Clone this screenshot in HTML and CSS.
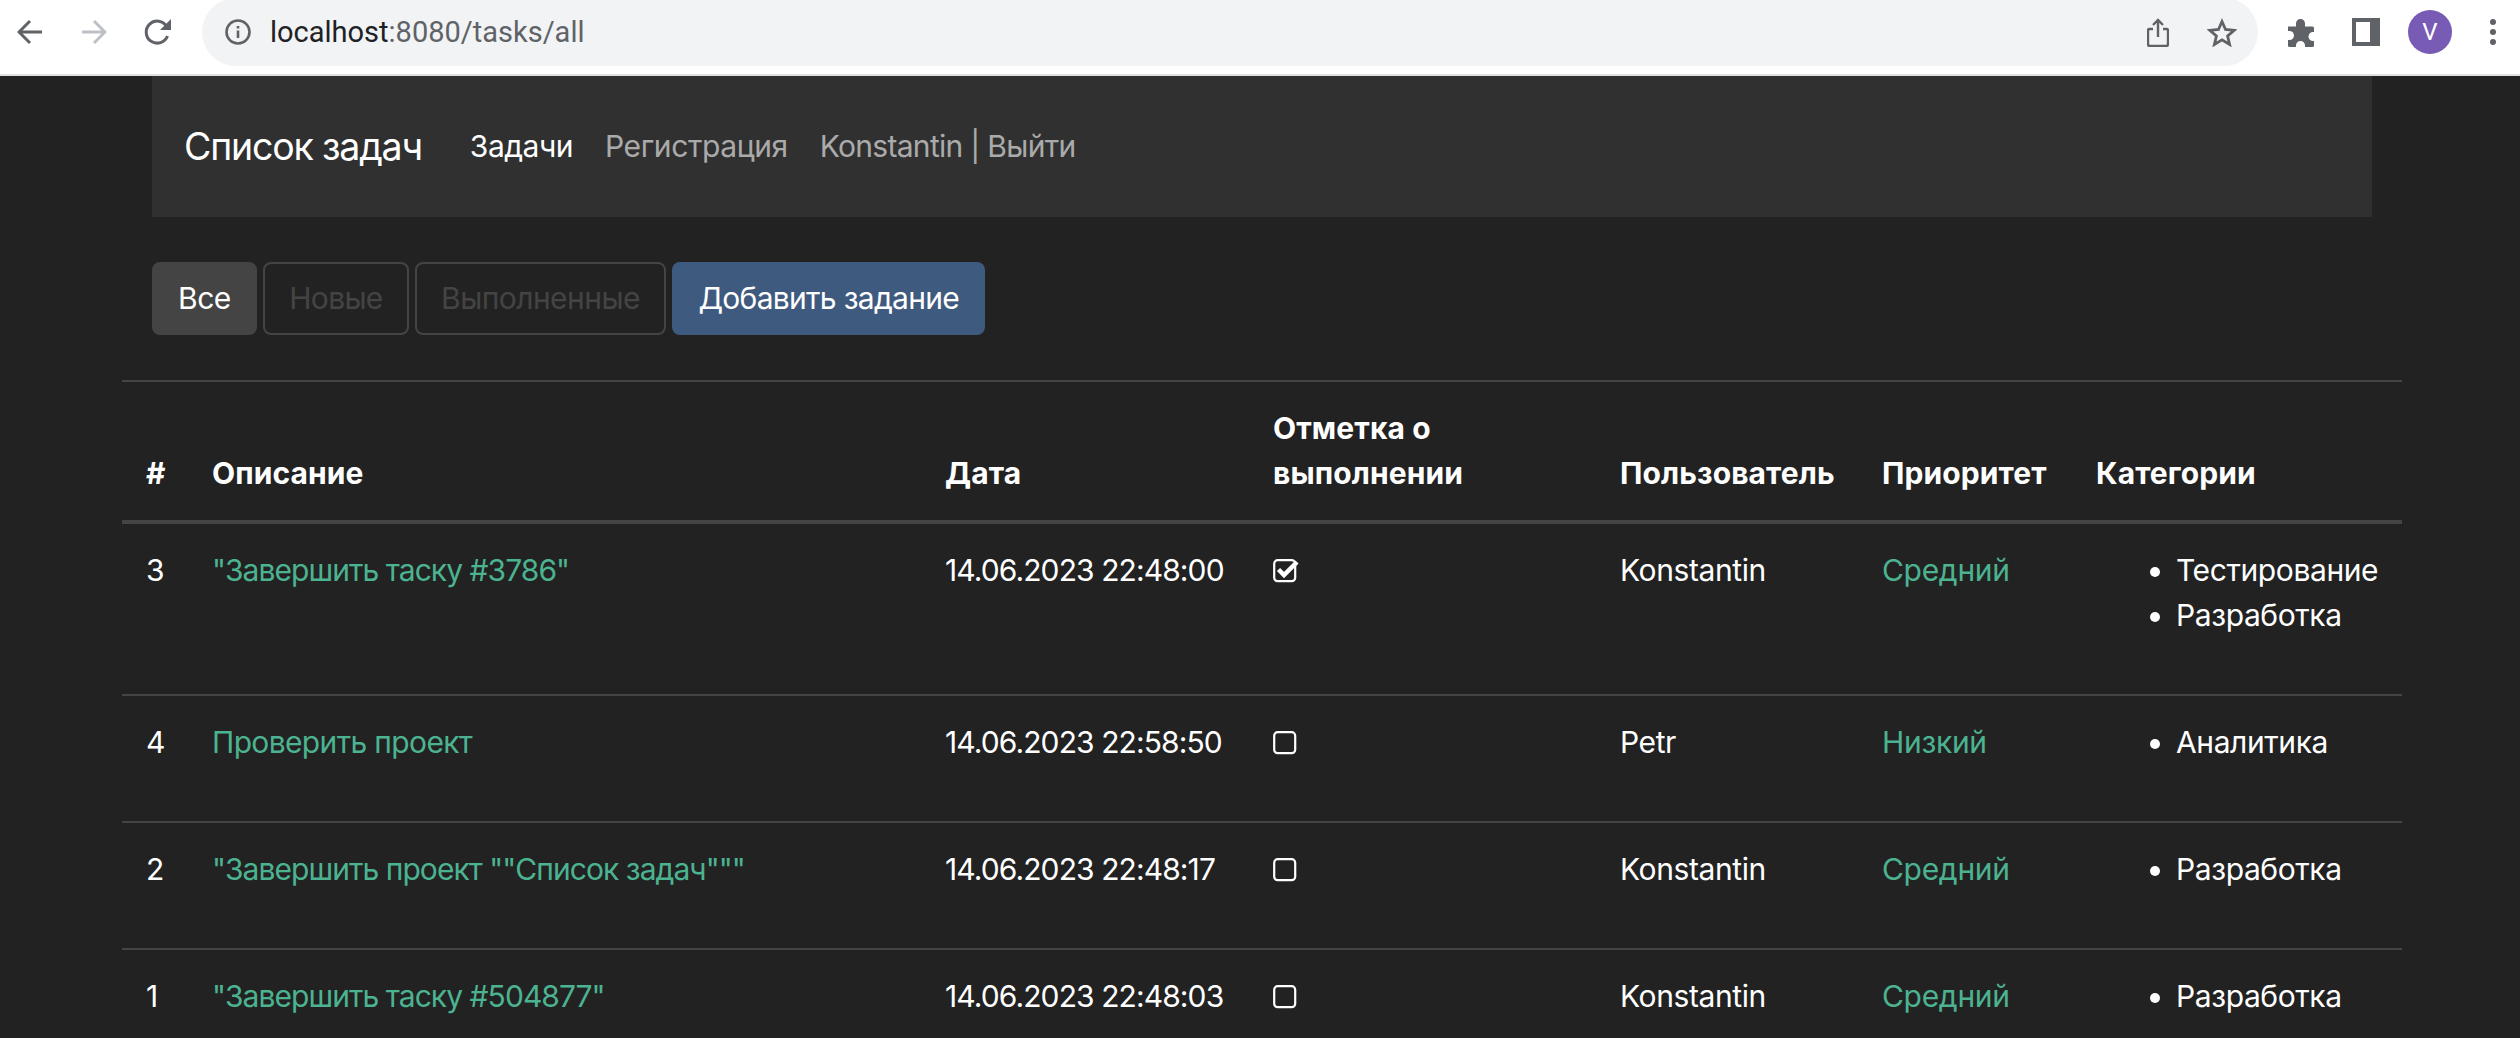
FILE: index.html
```html
<!DOCTYPE html>
<html lang="ru">
<head>
<meta charset="utf-8">
<title>Список задач</title>
<link rel="stylesheet" href="styles.css">
</head>
<body>
<header class="toolbar">
  <svg class="ico ico-back" viewBox="0 0 26 26"><path d="M25 13H3M13 2 2 13l11 11" fill="none" stroke="#5f6368" stroke-width="3"/></svg>
  <svg class="ico ico-fwd" viewBox="0 0 26 26"><path d="M1 13h22M13 2l11 11-11 11" fill="none" stroke="#bdc1c6" stroke-width="3"/></svg>
  <svg class="ico ico-reload" viewBox="0 0 28 28"><path d="M23.5 18a11 11 0 1 1-.8-9.5" fill="none" stroke="#5f6368" stroke-width="3"/><path d="M27 1v11H16z" fill="#5f6368"/></svg>
  <div class="omnibox">
    <svg class="ico ico-info" viewBox="0 0 26 26"><circle cx="13" cy="13" r="11.5" fill="none" stroke="#5f6368" stroke-width="2.6"/><path d="M11.7 11.5h2.6v7.5h-2.6zM11.7 7h2.6v2.6h-2.6z" fill="#5f6368"/></svg>
    <span class="url"><span class="host">localhost</span>:8080/tasks/all</span>
    <span class="spacer"></span>
    <svg class="ico ico-share" viewBox="0 0 22 29"><path d="M6 11H2.5A1.5 1.5 0 0 0 1 12.500V26a2 2 0 0 0 2 2h16a2 2 0 0 0 2-2V12.500A1.500 1.500 0 0 0 19.500 11H16M11 19V2M6 7l5-5 5 5" fill="none" stroke="#5f6368" stroke-width="2.400"/></svg>
    <svg class="ico ico-star" viewBox="0 0 30 29"><path d="m15 3.500 3.500 8 8.700.8-6.600 5.700 2 8.500L15 21.900l-7.600 4.600 2-8.500-6.600-5.700 8.700-.8z" fill="none" stroke="#5f6368" stroke-width="2.800"/></svg>
  </div>
  <svg class="ico ico-puzzle" viewBox="0 0 29 29"><path d="M0 8.500h8V5.500a4.500 4.500 0 0 1 9 0v3h7.500A1.500 1.500 0 0 1 26 10v4h-1a4.500 4.500 0 0 0 0 9h1v4.500a1.500 1.500 0 0 1-1.500 1.500H17v-1.500a4.500 4.500 0 0 0-9 0V29H1.500A1.500 1.500 0 0 1 0 27.500V22h1.500a4.500 4.500 0 0 0 0-9H0z" fill="#5f6368"/></svg>
  <svg class="ico ico-panel" viewBox="0 0 28 28"><path d="M0 0h28v28H0zM4 4v20h14V4z" fill="#5f6368" fill-rule="evenodd"/></svg>
  <div class="avatar">V</div>
  <div class="dots"><i></i><i></i><i></i></div>
</header>

<main class="page">
  <nav class="navbar">
    <a class="brand" href="#">Список задач</a>
    <a class="nav-link active" href="#">Задачи</a>
    <a class="nav-link" href="#">Регистрация</a>
    <a class="nav-link nav-user" href="#">Konstantin | Выйти</a>
  </nav>

  <div class="actions">
    <a class="btn btn-on" href="#">Все</a>
    <a class="btn btn-off" href="#">Новые</a>
    <a class="btn btn-off btn-wide" href="#">Выполненные</a>
    <a class="btn btn-primary" href="#">Добавить задание</a>
  </div>

  <table class="tasks">
    <colgroup>
      <col class="c-id"><col class="c-desc"><col class="c-date"><col class="c-done"><col class="c-user"><col class="c-prio"><col class="c-cat">
    </colgroup>
    <thead>
      <tr><th>#</th><th>Описание</th><th>Дата</th><th>Отметка о выполнении</th><th>Пользователь</th><th>Приоритет</th><th>Категории</th></tr>
    </thead>
    <tbody>
      <tr>
        <td>3</td><td><a class="desc" href="#">"Завершить таску #3786"</a></td><td class="date">14.06.2023 22:48:00</td>
        <td><svg class="check" viewBox="0 0 26 26"><rect x="1.200" y="3.200" width="21" height="21" rx="3.500" fill="none" stroke="#fff" stroke-width="2.200"/><path d="m5.500 12.500 5.500 5.500L24 5" fill="none" stroke="#fff" stroke-width="4.500"/></svg></td>
        <td>Konstantin</td><td><a class="prio" href="#">Средний</a></td>
        <td><ul><li>Тестирование</li><li>Разработка</li></ul></td>
      </tr>
      <tr>
        <td>4</td><td><a class="desc desc-plain" href="#">Проверить проект</a></td><td class="date">14.06.2023 22:58:50</td>
        <td><svg class="check" viewBox="0 0 26 26"><rect x="1.200" y="3.200" width="21" height="21" rx="3.500" fill="none" stroke="#fff" stroke-width="2.200"/></svg></td>
        <td>Petr</td><td><a class="prio" href="#">Низкий</a></td>
        <td><ul><li>Аналитика</li></ul></td>
      </tr>
      <tr>
        <td>2</td><td><a class="desc" href="#">"Завершить проект ""Список задач"""</a></td><td class="date">14.06.2023 22:48:17</td>
        <td><svg class="check" viewBox="0 0 26 26"><rect x="1.200" y="3.200" width="21" height="21" rx="3.500" fill="none" stroke="#fff" stroke-width="2.200"/></svg></td>
        <td>Konstantin</td><td><a class="prio" href="#">Средний</a></td>
        <td><ul><li>Разработка</li></ul></td>
      </tr>
      <tr>
        <td>1</td><td><a class="desc" href="#">"Завершить таску #504877"</a></td><td class="date">14.06.2023 22:48:03</td>
        <td><svg class="check" viewBox="0 0 26 26"><rect x="1.200" y="3.200" width="21" height="21" rx="3.500" fill="none" stroke="#fff" stroke-width="2.200"/></svg></td>
        <td>Konstantin</td><td><a class="prio" href="#">Средний</a></td>
        <td><ul><li>Разработка</li></ul></td>
      </tr>
    </tbody>
  </table>
</main>
</body>
</html>
```

FILE: styles.css
```css
* { box-sizing: border-box; }
html, body { margin: 0; height: 100%; overflow: hidden; }
body { background: #222; color: #fff; font-family: Inter, "Noto Sans", sans-serif; font-size: 30px; line-height: 45px; letter-spacing: -0.4px; }
a { text-decoration: none; }

.toolbar { display: flex; align-items: center; height: 76px; padding-bottom: 10px; background: #fff; border-bottom: 2px solid #e0e0e0; overflow: hidden; letter-spacing: 0; }
.ico { display: block; flex: none; }
.ico-back { width: 26px; height: 26px; margin-left: 17px; }
.ico-fwd { width: 26px; height: 26px; margin-left: 38px; }
.ico-reload { width: 28px; height: 28px; margin-left: 37px; }
.omnibox { display: flex; align-items: center; align-self: flex-end; width: 2056px; height: 68px; margin: 0 0 -2px 30px; padding-left: 23px; background: #f1f3f4; border-radius: 34px; color: #5f6368; }
.ico-info { width: 26px; height: 26px; }
.url { margin-left: 19px; font-family: Roboto, sans-serif; font-size: 29px; line-height: 34px; }
.host { color: #202124; }
.spacer { flex: 1; }
.ico-share { width: 22px; height: 29px; }
.ico-star { width: 30px; height: 29px; margin: 0 21px 0 38px; }
.ico-puzzle { width: 29px; height: 29px; margin-left: 30px; }
.ico-panel { width: 28px; height: 28px; margin-left: 35px; }
.avatar { flex: none; width: 44px; height: 44px; margin-left: 28px; border-radius: 50%; background: #785bb5; color: #fff; font-family: Roboto, sans-serif; font-size: 24px; line-height: 44px; text-align: center; }
.dots { display: flex; flex-direction: column; gap: 4px; margin-left: 38px; }
.dots i { display: block; width: 6px; height: 6px; border-radius: 50%; background: #5f6368; }

.page { width: 2280px; margin-left: 122px; }
.navbar { display: flex; align-items: center; height: 141px; margin: 0 30px; padding-left: 32px; background: #303030; }
.brand { margin-right: 48px; color: #fff; font-size: 37.500px; letter-spacing: -1.200px; }
.nav-link { margin-right: 32px; color: rgba(255,255,255,.6); }
.nav-link.active { color: #fff; letter-spacing: -0.500px; }
.nav-user { letter-spacing: -0.700px; }

.actions { display: flex; gap: 6.500px; margin: 45px 30px; }
.btn { padding: 12px 24px; border: 2px solid transparent; border-radius: 8px; color: #fff; letter-spacing: -0.700px; white-space: nowrap; }
.btn-on { background: #444; letter-spacing: -0.500px; }
.btn-off { border-color: #444; color: #444; }
.btn-wide { letter-spacing: -0.550px; }
.btn-primary { background: #3e5a7e; }

.tasks { width: 2280px; table-layout: fixed; border-collapse: collapse; }
.c-id { width: 66px; } .c-desc { width: 733px; } .c-date { width: 328px; } .c-done { width: 347px; }
.c-user { width: 262px; } .c-prio { width: 214px; } .c-cat { width: 330px; }
th, td { padding: 24px; text-align: left; vertical-align: top; border-top: 2px solid #444; }
th { vertical-align: bottom; font-weight: 700; letter-spacing: 0.100px; border-bottom: 4px solid #444; }
td a { color: #4cb391; }
.desc { letter-spacing: -0.950px; }
.desc-plain { letter-spacing: -0.650px; }
.prio { letter-spacing: -0.300px; }
.date { white-space: nowrap; letter-spacing: -0.900px; }
ul { margin: 0 0 32px; padding-left: 80px; }
.check { display: block; width: 26px; height: 26px; margin-top: 9px; }
```
